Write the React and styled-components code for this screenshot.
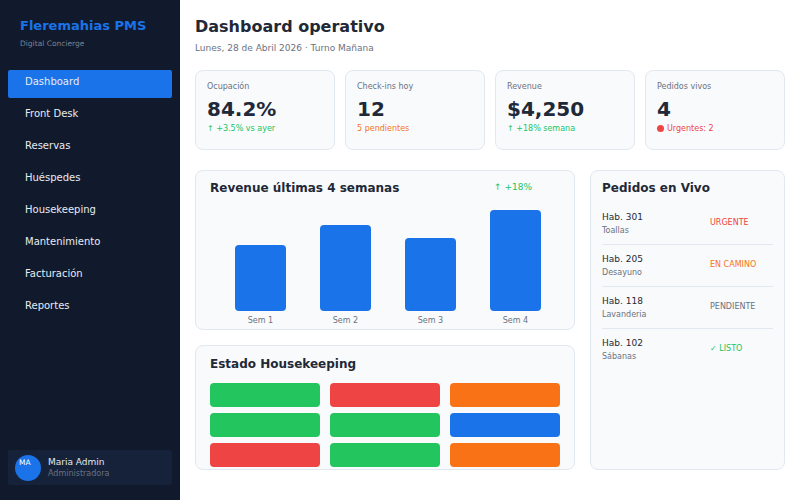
import React from "react";
import styled, { createGlobalStyle } from "styled-components";

const Global = createGlobalStyle`
  html, body { margin: 0; padding: 0; }
  body { font-family: "DejaVu Sans", sans-serif; background: #ffffff; }
  * { box-sizing: border-box; }
`;

const Shell = styled.div`
  display: flex;
  width: 800px;
  height: 500px;
  overflow: hidden;
`;

const Sidebar = styled.aside`
  width: 180px;
  flex: 0 0 180px;
  background: #111a2d;
  display: flex;
  flex-direction: column;
  padding: 18px 8px 15px;
`;

const Brand = styled.div`
  padding-left: 12px;
`;

const BrandName = styled.div`
  font-size: 13px;
  line-height: 16px;
  font-weight: 700;
  color: #1a73e8;
`;

const BrandTag = styled.div`
  margin-top: 5px;
  font-size: 7.5px;
  line-height: 10px;
  color: #7b8494;
`;

const Nav = styled.nav`
  margin-top: 21px;
  display: flex;
  flex-direction: column;
  gap: 4px;
`;

const NavItem = styled.div`
  height: 28px;
  display: flex;
  align-items: center;
  padding: 0 0 5px 17px;
  font-size: 10px;
  color: #e8ebf0;
  border-radius: 2px;
  background: ${(p) => (p.$active ? "#1a73e8" : "transparent")};
`;

const UserBox = styled.div`
  margin-top: auto;
  height: 35px;
  background: #15223a;
  border-radius: 2px;
  display: flex;
  align-items: center;
  gap: 7px;
  padding: 0 7px;
`;

const Avatar = styled.div`
  width: 26px;
  height: 26px;
  border-radius: 50%;
  background: #1a73e8;
  color: #ffffff;
  font-size: 7.5px;
  line-height: 9px;
  padding: 3px 0 0 4px;
  flex: 0 0 26px;
`;

const UserName = styled.div`
  font-size: 9px;
  line-height: 12px;
  color: #e5e7eb;
`;

const UserRole = styled.div`
  font-size: 8px;
  line-height: 11px;
  color: #6b7280;
`;

const Main = styled.main`
  flex: 1;
  padding: 17px 15px 15px;
  display: flex;
  flex-direction: column;
`;

const Title = styled.h1`
  margin: 0;
  font-size: 16px;
  line-height: 20px;
  font-weight: 700;
  color: #1f2937;
`;

const Subtitle = styled.div`
  margin-top: 5px;
  font-size: 9px;
  line-height: 12px;
  color: #6b7280;
`;

const KpiGrid = styled.div`
  margin-top: 16px;
  display: grid;
  grid-template-columns: repeat(4, 1fr);
  gap: 10px;
`;

const Card = styled.section`
  background: #f8fafc;
  border: 1px solid #e2e8f0;
  border-radius: 8px;
  overflow: hidden;
`;

const KpiCard = styled(Card)`
  height: 80px;
  padding: 11px 11px;
`;

const KpiLabel = styled.div`
  font-size: 8px;
  line-height: 10px;
  color: #6b7280;
`;

const KpiValue = styled.div`
  margin-top: 5px;
  font-size: 20px;
  line-height: 24px;
  font-weight: 700;
  color: #1f2937;
`;

const KpiSub = styled.div`
  margin-top: 3px;
  font-size: 8px;
  line-height: 10px;
  color: ${(p) => p.$color};
`;

const Dot = styled.span`
  display: inline-block;
  width: 7px;
  height: 7px;
  border-radius: 50%;
  background: #ef4444;
  margin-right: 3px;
  vertical-align: -1px;
`;

const Content = styled.div`
  margin-top: 20px;
  display: grid;
  grid-template-columns: 380px 1fr;
  grid-template-rows: 160px 125px;
  gap: 15px;
`;

const RevenueCard = styled(Card)`
  grid-column: 1;
  grid-row: 1;
  padding: 9px 14px 0;
  display: flex;
  flex-direction: column;
`;

const CardHead = styled.div`
  display: flex;
  justify-content: space-between;
  align-items: flex-start;
  padding-right: 28px;
`;

const CardTitle = styled.h2`
  margin: 0;
  font-size: 12px;
  line-height: 16px;
  font-weight: 700;
  color: #1f2937;
`;

const Trend = styled.div`
  font-size: 9px;
  line-height: 14px;
  color: #22c55e;
`;

const Chart = styled.div`
  flex: 1;
  display: grid;
  grid-template-columns: repeat(4, 1fr);
  column-gap: 34px;
  padding: 0 19px 0 25px;
  align-items: end;
  margin-bottom: 3px;
`;

const BarCol = styled.div`
  display: flex;
  flex-direction: column;
  align-items: stretch;
`;

const Bar = styled.div`
  background: #1a73e8;
  border-radius: 4px;
  height: ${(p) => p.$h}px;
`;

const BarLabel = styled.div`
  margin-top: 4px;
  font-size: 8px;
  line-height: 11px;
  text-align: center;
  color: #6b7280;
`;

const HkCard = styled(Card)`
  grid-column: 1;
  grid-row: 2;
  padding: 10px 14px 0;
`;

const HkGrid = styled.div`
  margin-top: 11px;
  display: grid;
  grid-template-columns: repeat(3, 1fr);
  column-gap: 10px;
  row-gap: 6px;
`;

const HkCell = styled.div`
  height: 24px;
  border-radius: 4px;
  background: ${(p) => p.$color};
`;

const OrdersCard = styled(Card)`
  grid-column: 2;
  grid-row: 1 / span 2;
  padding: 9px 11px;
`;

const OrderList = styled.div`
  margin-top: 7px;
`;

const OrderRow = styled.div`
  display: grid;
  grid-template-columns: 1fr 63px;
  align-items: center;
  padding: 8px 0 7px;
  border-bottom: ${(p) => (p.$last ? "none" : "1px solid #e2e8f0")};
`;

const Room = styled.div`
  font-size: 9px;
  line-height: 13px;
  color: #1f2937;
`;

const Item = styled.div`
  margin-top: 1px;
  font-size: 8px;
  line-height: 12px;
  color: #6b7280;
`;

const Status = styled.div`
  font-size: 8px;
  line-height: 10px;
  color: ${(p) => p.$color};
  margin-bottom: 2px;
`;

const GREEN = "#22c55e";
const RED = "#ef4444";
const ORANGE = "#f97316";
const BLUE = "#1a73e8";
const GREY = "#6b7280";

const navItems = [
  "Dashboard",
  "Front Desk",
  "Reservas",
  "Huéspedes",
  "Housekeeping",
  "Mantenimiento",
  "Facturación",
  "Reportes",
];

const kpis = [
  { label: "Ocupación", value: "84.2%", sub: "↑ +3.5% vs ayer", color: GREEN },
  { label: "Check-ins hoy", value: "12", sub: "5 pendientes", color: ORANGE },
  { label: "Revenue", value: "$4,250", sub: "↑ +18% semana", color: GREEN },
  { label: "Pedidos vivos", value: "4", sub: "Urgentes: 2", color: RED, dot: true },
];

const bars = [
  { label: "Sem 1", h: 66 },
  { label: "Sem 2", h: 86 },
  { label: "Sem 3", h: 73 },
  { label: "Sem 4", h: 101 },
];

const hk = [GREEN, RED, ORANGE, GREEN, GREEN, BLUE, RED, GREEN, ORANGE];

const orders = [
  { room: "Hab. 301", item: "Toallas", status: "URGENTE", color: RED },
  { room: "Hab. 205", item: "Desayuno", status: "EN CAMINO", color: ORANGE },
  { room: "Hab. 118", item: "Lavanderia", status: "PENDIENTE", color: GREY },
  { room: "Hab. 102", item: "Sábanas", status: "✓ LISTO", color: GREEN },
];

export default function App() {
  return (
    <>
      <Global />
      <Shell>
        <Sidebar>
          <Brand>
            <BrandName>Fleremahias PMS</BrandName>
            <BrandTag>Digital Concierge</BrandTag>
          </Brand>
          <Nav>
            {navItems.map((n, i) => (
              <NavItem key={n} $active={i === 0}>
                {n}
              </NavItem>
            ))}
          </Nav>
          <UserBox>
            <Avatar>MA</Avatar>
            <div>
              <UserName>Maria Admin</UserName>
              <UserRole>Administradora</UserRole>
            </div>
          </UserBox>
        </Sidebar>
        <Main>
          <Title>Dashboard operativo</Title>
          <Subtitle>Lunes, 28 de Abril 2026 · Turno Mañana</Subtitle>
          <KpiGrid>
            {kpis.map((k) => (
              <KpiCard key={k.label}>
                <KpiLabel>{k.label}</KpiLabel>
                <KpiValue>{k.value}</KpiValue>
                <KpiSub $color={k.color}>
                  {k.dot && <Dot />}
                  {k.sub}
                </KpiSub>
              </KpiCard>
            ))}
          </KpiGrid>
          <Content>
            <RevenueCard>
              <CardHead>
                <CardTitle>Revenue últimas 4 semanas</CardTitle>
                <Trend>↑ +18%</Trend>
              </CardHead>
              <Chart>
                {bars.map((b) => (
                  <BarCol key={b.label}>
                    <Bar $h={b.h} />
                    <BarLabel>{b.label}</BarLabel>
                  </BarCol>
                ))}
              </Chart>
            </RevenueCard>
            <HkCard>
              <CardTitle>Estado Housekeeping</CardTitle>
              <HkGrid>
                {hk.map((c, i) => (
                  <HkCell key={i} $color={c} />
                ))}
              </HkGrid>
            </HkCard>
            <OrdersCard>
              <CardTitle>Pedidos en Vivo</CardTitle>
              <OrderList>
                {orders.map((o, i) => (
                  <OrderRow key={o.room} $last={i === orders.length - 1}>
                    <div>
                      <Room>{o.room}</Room>
                      <Item>{o.item}</Item>
                    </div>
                    <Status $color={o.color}>{o.status}</Status>
                  </OrderRow>
                ))}
              </OrderList>
            </OrdersCard>
          </Content>
        </Main>
      </Shell>
    </>
  );
}
